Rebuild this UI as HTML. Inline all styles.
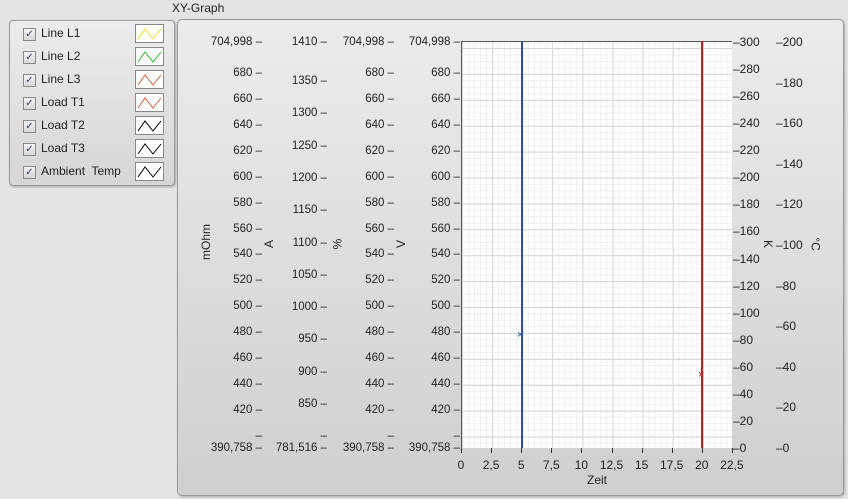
<!DOCTYPE html>
<html><head><meta charset="utf-8">
<style>
body{margin:0;width:848px;height:499px;background:#e4e4e4;font-family:"Liberation Sans",sans-serif;font-size:12px;color:#222;position:relative;overflow:hidden}
.a{position:absolute;white-space:nowrap}
.r{text-align:right;font-size:11.5px}
#legend{position:absolute;left:9px;top:20px;width:164px;height:164px;border:1px solid #9a9a9a;border-radius:4px;background:linear-gradient(#ececec,#d6d6d6);box-shadow:1px 1px 2px #aaa}
#panel{position:absolute;left:177px;top:19px;width:665px;height:475px;border:1px solid #999;border-radius:5px;background:linear-gradient(#ececec,#cfcfcf);box-shadow:1px 1px 2px #aaa}
.cb{position:absolute;left:13px;width:11px;height:11px;border:1px solid #8a8a8a;background:linear-gradient(#f4f4f4,#d8d8d8);font-size:10px;line-height:11px;text-align:center;color:#2b3a7a}
.sw{position:absolute;left:125px;width:27px;height:17px;border:1px solid #888;background:#fff}
#plot{position:absolute;left:461px;top:41px;width:271px;height:407px;background-color:#fff;
background-image:
linear-gradient(90deg,#d6d6d6 1px,transparent 1px),
linear-gradient(#d6d6d6 1px,transparent 1px),
linear-gradient(90deg,#efefef 1px,transparent 1px),
linear-gradient(#efefef 1px,transparent 1px);
background-size:30.1px 100%,100% 25.92px,6.02px 100%,100% 6.48px;
background-position:0 0,0 6px,0 0,0 6px;
border-top:1px solid #555;border-left:1px solid #555;box-sizing:border-box}
.rot{transform:rotate(-90deg);transform-origin:center}
</style></head><body>
<div class="a" style="left:172px;top:1px">XY-Graph</div>
<div id="legend"></div>
<div id="panel"></div>
<div id="plot"></div>
<div class="a" style="left:521px;top:41px;width:2px;height:407px;background:#2a4fa8"></div>
<div class="a" style="left:701px;top:41px;width:2px;height:407px;background:#c02020"></div>
<div class="a" style="left:517px;top:329px;color:#2a4fa8;font-size:11px">×</div>
<div class="a" style="left:698px;top:369px;color:#c02020;font-size:11px">×</div>
<div class="a" style="left:587px;top:473px">Zeit</div>
<div class="a rot" style="left:188px;top:235px">mOhm</div>
<div class="a rot" style="left:265px;top:237px">A</div>
<div class="a rot" style="left:332px;top:237px">%</div>
<div class="a rot" style="left:397px;top:237px">V</div>
<div class="a rot" style="left:764px;top:237px;transform:rotate(90deg)">K</div>
<div class="a rot" style="left:809px;top:237px;transform:rotate(90deg)">°C</div>
<script>
const B=document.body;
function t(x,y,s,cls,w){const d=document.createElement('div');d.className='a '+(cls||'');d.style.left=x+'px';d.style.top=y+'px';if(w)d.style.width=w+'px';d.textContent=s;B.appendChild(d);return d;}
const names=["Line L1","Line L2","Line L3","Load T1","Load T2","Load T3","Ambient  Temp"];
const cols=["#e8e020","#20c020","#d06030","#d06030","#000","#000","#000"];
names.forEach((n,i)=>{const y=27+i*23;
const c=document.createElement('div');c.className='cb';c.style.left='23px';c.style.top=(y+1)+'px';c.textContent='✓';B.appendChild(c);
t(41,y-1,n).style.whiteSpace='pre';
const s=document.createElement('div');s.className='sw';s.style.left='135px';s.style.top=(y-3)+'px';
s.innerHTML='<svg width="27" height="17"><polyline points="2,14 9,4 17,14 25,4" fill="none" stroke="'+cols[i]+'" stroke-width="1"/></svg>';B.appendChild(s);});
function ax(right,labels){labels.forEach(([s,y])=>{t(right-80,y-6,s+' –','r',80);});}
function mohm(){const a=[["704,998",42]];for(let v=680;v>=420;v-=20)a.push([v,73+(680-v)*1.296]);a.push(["390,758",448]);a.push(["",436]);return a;}
ax(262,mohm());ax(394,mohm());ax(460,mohm());
const A=[["1410",42]];for(let v=1350;v>=850;v-=50)A.push([v,81+(1350-v)*0.646]);A.push(["781,516",448]);A.push(["",436]);
ax(327,A);
for(let i=0;i<=9;i++){const x=461+i*30.1;const v=(i*2.5).toString().replace('.',',');
const d=t(x-20,458,v,'',40);d.style.textAlign='center';
const k=document.createElement('div');k.className='a';k.style.cssText='left:'+x+'px;top:448px;width:1px;height:5px;background:#333';B.appendChild(k);}
for(let v=300;v>=0;v-=20)t(733,42+(300-v)*1.3533-7,'–'+v);
for(let v=200;v>=0;v-=20)t(776,42+(200-v)*2.03-7,'–'+v);
</script>
</body></html>
